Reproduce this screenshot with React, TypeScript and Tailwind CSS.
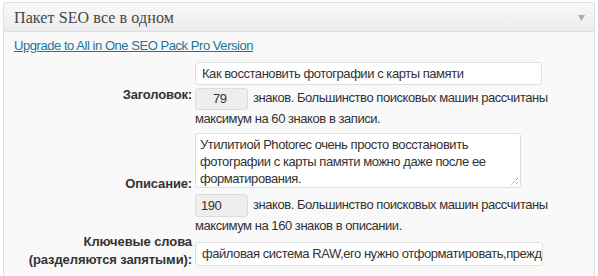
import React from "react";

export default function App() {
  const sans = { fontFamily: '"Liberation Sans", Arial, sans-serif' };
  return (
    <div className="w-[598px] h-[276px] overflow-hidden bg-white pt-[2px] pl-[3px]" style={sans}>
      <div className="w-[592px] h-[300px] border border-[#dfdfdf] rounded-t-[3px] bg-[#f9f9f9] text-[13px] text-[#333] tracking-[-0.45px]">
        <div className="h-[29px] border-b border-[#dfdfdf] bg-gradient-to-b from-[#f9f9f9] to-[#ececec] flex items-center justify-between pl-[10px] pr-[9px] rounded-t-[3px]">
          <span
            className="text-[16px] text-[#464646] leading-none pt-[2px] tracking-[0.1px]"
            style={{ fontFamily: '"Liberation Serif", "Times New Roman", serif' }}
          >
            Пакет SEO все в одном
          </span>
          <svg width="7" height="6" viewBox="0 0 7 6" className="mt-[1px]">
            <polygon points="0,0 7,0 3.5,6" fill="#aaaaaa" />
          </svg>
        </div>
        <div className="pl-[10px] pt-[6px] leading-[15px]">
          <a href="#" className="text-[#21759b] underline text-[13px]">
            Upgrade to All in One SEO Pack Pro Version
          </a>
        </div>

        {/* Title row */}
        <div className="flex items-center mt-[9px]">
          <div className="w-[188px] text-right font-bold tracking-[-0.15px]">Заголовок:</div>
          <div className="ml-[3px] w-[370px]">
            <div className="w-[347px] h-[23px] bg-white border border-[#dfdfdf] rounded-[3px] flex items-center pl-[6px]">
              Как восстановить фотографии с карты памяти
            </div>
            <div className="mt-[3px] leading-[18px]">
              <span className="inline-flex align-middle items-center w-[53px] h-[22px] bg-[#eeeeee] border border-[#dddddd] rounded-[3px] pl-[17px] mr-[5px]">
                79
              </span>
              знаков. Большинство поисковых машин рассчитаны максимум на 60 знаков в записи.
            </div>
          </div>
        </div>

        {/* Description row */}
        <div className="flex items-center mt-[5px]">
          <div className="w-[188px] text-right font-bold tracking-[-0.15px]">Описание:</div>
          <div className="ml-[3px] w-[370px]">
            <div className="relative w-[326px] h-[55px] bg-white border border-[#dfdfdf] rounded-[3px] pl-[4px] pt-[2px] pr-[4px] leading-[17px]">
              Утилитиой Photorec очень просто восстановить фотографии с карты памяти можно даже после ее форматирования.
              <svg width="8" height="8" viewBox="0 0 8 8" className="absolute right-[2px] bottom-[2px]">
                <line x1="8" y1="1" x2="1" y2="8" stroke="#777" strokeWidth="1" strokeDasharray="1 1" />
                <line x1="8" y1="5" x2="5" y2="8" stroke="#777" strokeWidth="1" strokeDasharray="1 1" />
              </svg>
            </div>
            <div className="mt-[6px] leading-[18px]">
              <span className="inline-flex align-middle items-center w-[53px] h-[23px] bg-[#eeeeee] border border-[#dddddd] rounded-[3px] pl-[5px] mr-[5px]">
                190
              </span>
              знаков. Большинство поисковых машин рассчитаны максимум на 160 знаков в описании.
            </div>
          </div>
        </div>

        {/* Keywords row */}
        <div className="flex items-start -mt-[2px]">
          <div className="w-[188px] text-right font-bold leading-[18px] tracking-[-0.1px]">
            Ключевые слова
            <br />
            (разделяются запятыми):
          </div>
          <div className="ml-[3px] w-[370px] mt-[9px]">
            <div className="w-[348px] h-[24px] bg-white border border-[#dfdfdf] rounded-[3px] flex items-center pl-[6px] overflow-hidden whitespace-nowrap">
              файловая система RAW,его нужно отформатировать,прежд
            </div>
          </div>
        </div>
      </div>
    </div>
  );
}
